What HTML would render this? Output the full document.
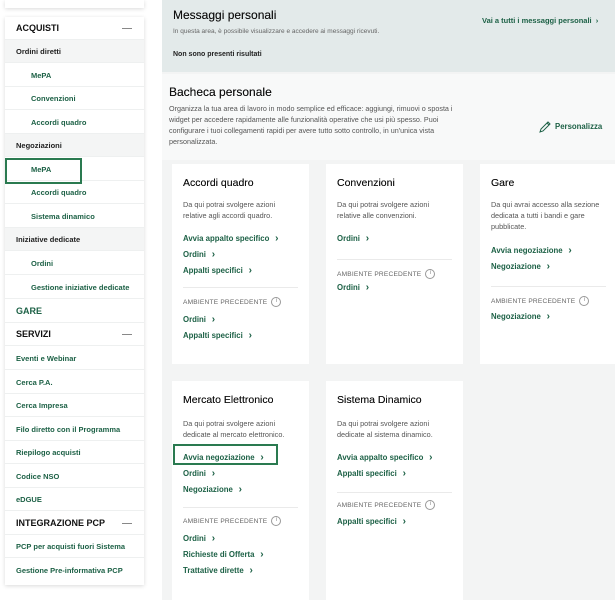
<!DOCTYPE html>
<html><head><meta charset="utf-8"><style>
*{margin:0;padding:0;box-sizing:border-box}
body{width:615px;height:600px;overflow:hidden;background:#fff;font-family:"Liberation Sans",sans-serif;position:relative}
.a{position:absolute}
.sb{left:5px;top:17px;width:139px;height:568px;background:#fff;box-shadow:0 1px 4px rgba(0,0,0,.15)}
.row{position:absolute;left:0;width:139px;height:23px;border-bottom:1px solid #eef0f0;font-size:7.5px;font-weight:bold;line-height:23px;padding-left:11px;color:#1d6146}
.row.s{padding-left:26px}
.row.g{background:#f4f5f5;color:#222}
.row.h{font-size:9px;color:#111}
.row.h:after{content:"";position:absolute;right:12px;top:11px;width:10px;height:1px;background:#888}
.main{left:162px;top:0;width:453px;height:600px;background:#f3f4f4}
.card{position:absolute;background:#fff;width:137px}
.card h3{position:absolute;left:11px;top:13px;font-size:10.5px;font-weight:normal;color:#111;text-shadow:0 0 .3px #111}
.t{position:absolute;left:11px;font-size:7.3px;color:#555;line-height:11px}
.l{position:absolute;left:11px;font-size:7.8px;font-weight:bold;color:#1d6146}
.l:after{content:" \203A";font-size:10px;padding-left:3px}
.ap{position:absolute;left:11px;font-size:6.6px;color:#666;letter-spacing:.2px}
.ap:after{content:"i";display:inline-block;width:8px;height:8px;border:1px solid #999;border-radius:50%;font-size:6px;text-align:center;line-height:7px;margin-left:4px;color:#888;vertical-align:middle}
.hr{position:absolute;left:11px;width:115px;height:1px;background:#eaeaea}
</style></head><body>
<div class="a" style="left:5px;top:0;width:139px;height:8px;background:#fff;box-shadow:0 1px 4px rgba(0,0,0,.15)"></div>
<div class="a sb">
<div class="row h" style="top:0">ACQUISTI</div>
<div class="row g" style="top:23px">Ordini diretti</div>
<div class="row s" style="top:47px">MePA</div>
<div class="row s" style="top:70px">Convenzioni</div>
<div class="row s" style="top:94px">Accordi quadro</div>
<div class="row g" style="top:117px">Negoziazioni</div>
<div class="row s" style="top:141px">MePA</div>
<div class="row s" style="top:164px">Accordi quadro</div>
<div class="row s" style="top:188px">Sistema dinamico</div>
<div class="row g" style="top:211px">Iniziative dedicate</div>
<div class="row s" style="top:235px">Ordini</div>
<div class="row s" style="top:259px">Gestione iniziative dedicate</div>
<div class="row" style="top:283px;font-size:9px">GARE</div>
<div class="row h" style="top:306px">SERVIZI</div>
<div class="row" style="top:330px">Eventi e Webinar</div>
<div class="row" style="top:354px">Cerca P.A.</div>
<div class="row" style="top:377px">Cerca Impresa</div>
<div class="row" style="top:401px">Filo diretto con il Programma</div>
<div class="row" style="top:424px">Riepilogo acquisti</div>
<div class="row" style="top:448px">Codice NSO</div>
<div class="row" style="top:471px">eDGUE</div>
<div class="row h" style="top:495px">INTEGRAZIONE PCP</div>
<div class="row" style="top:518px">PCP per acquisti fuori Sistema</div>
<div class="row" style="top:542px;border:0">Gestione Pre-informativa PCP</div>
</div>
<div class="a" style="left:5px;top:158px;width:77px;height:26px;border:2px solid #2a7a50"></div>

<div class="a main">
<div class="a" style="left:0;top:0;width:453px;height:72px;background:#e3eaea">
<div class="a" style="left:11px;top:8px;font-size:12px;color:#111;text-shadow:0 0 .3px #111">Messaggi personali</div>
<div class="a" style="left:11px;top:28px;font-size:6.5px;color:#666">In questa area, è possibile visualizzare e accedere ai messaggi ricevuti.</div>
<div class="a" style="left:11px;top:51px;font-size:7px;font-weight:bold;color:#222">Non sono presenti risultati</div>
<div class="a" style="left:320px;top:16px;font-size:7.5px;font-weight:bold;color:#1d6146">Vai a tutti i messaggi personali &nbsp;›</div>
</div>
<div class="a" style="left:0;top:74px;width:453px;height:86px;background:#f8f9f9">
<div class="a" style="left:7px;top:11px;font-size:12px;color:#111;text-shadow:0 0 .3px #111">Bacheca personale</div>
<div class="a" style="left:7px;top:29px;width:300px;font-size:7.2px;color:#555;line-height:11px">Organizza la tua area di lavoro in modo semplice ed efficace: aggiungi, rimuovi o sposta i widget per accedere rapidamente alle funzionalità operative che usi più spesso. Puoi configurare i tuoi collegamenti rapidi per avere tutto sotto controllo, in un'unica vista personalizzata.</div>
<svg class="a" style="left:377px;top:47px" width="12" height="12" viewBox="0 0 12 12"><path d="M1 11 L2 8 L9 1 L11 3 L4 10 Z M8 2 L10 4" fill="none" stroke="#1d6146" stroke-width="1"/></svg>
<div class="a" style="left:393px;top:48px;font-size:7.8px;font-weight:bold;color:#1d6146">Personalizza</div>
</div>

<div class="card" style="left:10px;top:164px;height:200px">
<h3>Accordi quadro</h3>
<div class="t" style="top:35px">Da qui potrai svolgere azioni<br>relative agli accordi quadro.</div>
<div class="l" style="top:69px">Avvia appalto specifico</div>
<div class="l" style="top:85px">Ordini</div>
<div class="l" style="top:101px">Appalti specifici</div>
<div class="hr" style="top:123px"></div>
<div class="ap" style="top:133px">AMBIENTE PRECEDENTE</div>
<div class="l" style="top:150px">Ordini</div>
<div class="l" style="top:166px">Appalti specifici</div>
</div>
<div class="card" style="left:164px;top:164px;height:200px">
<h3>Convenzioni</h3>
<div class="t" style="top:35px">Da qui potrai svolgere azioni<br>relative alle convenzioni.</div>
<div class="l" style="top:69px">Ordini</div>
<div class="hr" style="top:95px"></div>
<div class="ap" style="top:105px">AMBIENTE PRECEDENTE</div>
<div class="l" style="top:118px">Ordini</div>
</div>
<div class="card" style="left:318px;top:164px;height:200px">
<h3>Gare</h3>
<div class="t" style="top:35px">Da qui avrai accesso alla sezione<br>dedicata a tutti i bandi e gare<br>pubblicate.</div>
<div class="l" style="top:81px">Avvia negoziazione</div>
<div class="l" style="top:97px">Negoziazione</div>
<div class="hr" style="top:122px"></div>
<div class="ap" style="top:132px">AMBIENTE PRECEDENTE</div>
<div class="l" style="top:147px">Negoziazione</div>
</div>

<div class="card" style="left:10px;top:381px;height:220px">
<h3>Mercato Elettronico</h3>
<div class="t" style="top:37px">Da qui potrai svolgere azioni<br>dedicate al mercato elettronico.</div>
<div class="l" style="top:71px">Avvia negoziazione</div>
<div class="l" style="top:87px">Ordini</div>
<div class="l" style="top:103px">Negoziazione</div>
<div class="hr" style="top:126px"></div>
<div class="ap" style="top:135px">AMBIENTE PRECEDENTE</div>
<div class="l" style="top:152px">Ordini</div>
<div class="l" style="top:168px">Richieste di Offerta</div>
<div class="l" style="top:184px">Trattative dirette</div>
</div>
<div class="a" style="left:11px;top:444px;width:105px;height:21px;border:2px solid #2a7a50"></div>
<div class="card" style="left:164px;top:381px;height:220px">
<h3>Sistema Dinamico</h3>
<div class="t" style="top:37px">Da qui potrai svolgere azioni<br>dedicate al sistema dinamico.</div>
<div class="l" style="top:71px">Avvia appalto specifico</div>
<div class="l" style="top:87px">Appalti specifici</div>
<div class="hr" style="top:111px"></div>
<div class="ap" style="top:119px">AMBIENTE PRECEDENTE</div>
<div class="l" style="top:135px">Appalti specifici</div>
</div>
</div>
</body></html>
